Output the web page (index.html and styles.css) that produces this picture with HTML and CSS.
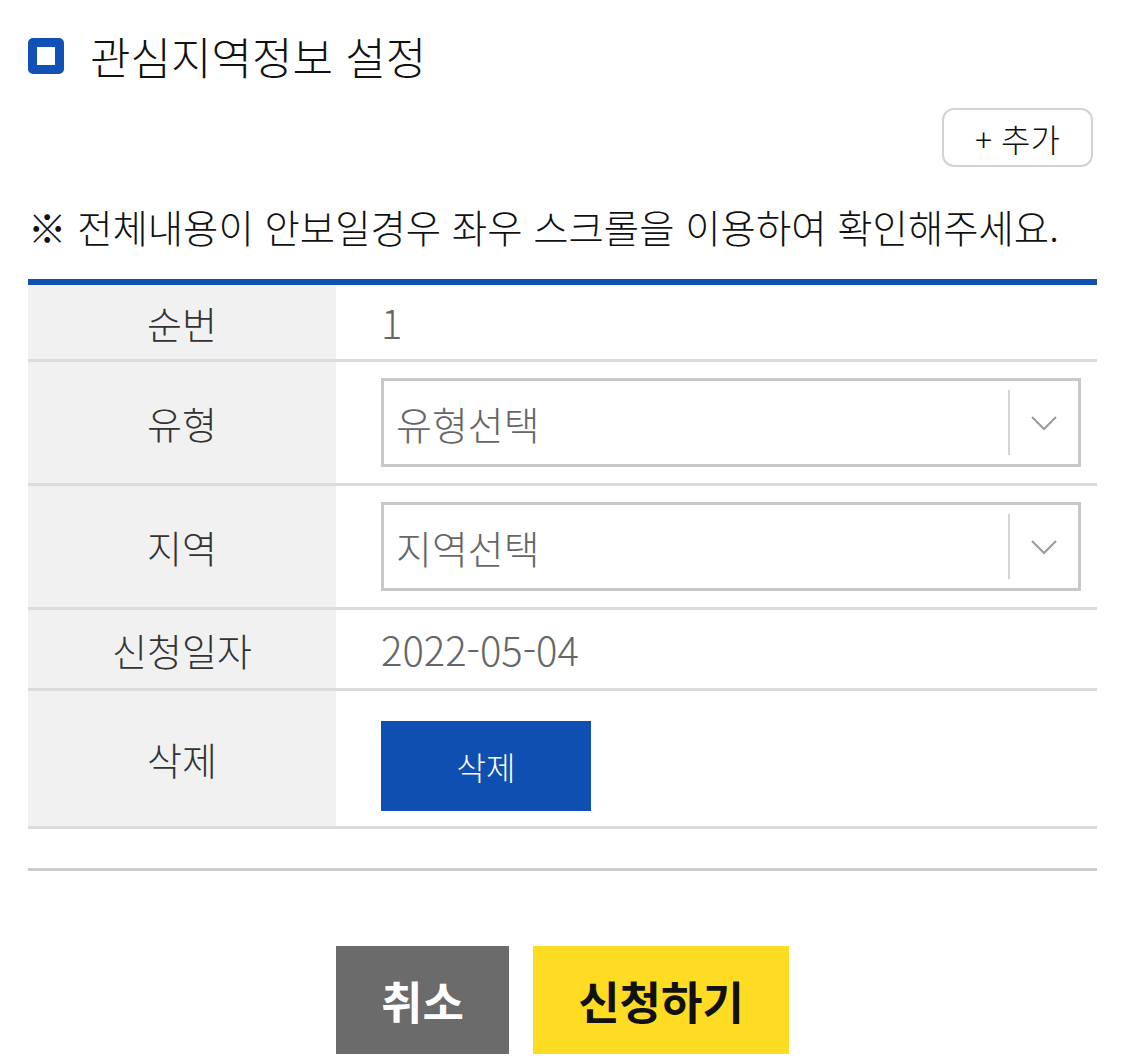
FILE: index.html
```html
<!DOCTYPE html>
<html lang="ko">
<head>
<meta charset="utf-8">
<title>관심지역정보 설정</title>
<link rel="stylesheet" href="styles.css">
</head>
<body>
<div class="page">
  <h1 class="title"><span class="title-icon"></span>관심지역정보 설정</h1>
  <div class="toolbar">
    <button class="add-btn" type="button">+ 추가</button>
  </div>
  <p class="notice">※ 전체내용이 안보일경우 좌우 스크롤을 이용하여 확인해주세요.</p>
  <div class="table">
    <div class="row row-seq">
      <div class="th">순번</div>
      <div class="td value">1</div>
    </div>
    <div class="row row-select">
      <div class="th">유형</div>
      <div class="td">
        <div class="select">
          <span class="placeholder">유형선택</span>
          <span class="divider"></span>
          <svg class="chevron" width="28" height="16" viewBox="0 0 28 16"><path d="M2 2 L14 14 L26 2" fill="none" stroke="#9a9a9a" stroke-width="2"/></svg>
        </div>
      </div>
    </div>
    <div class="row row-select">
      <div class="th">지역</div>
      <div class="td">
        <div class="select">
          <span class="placeholder">지역선택</span>
          <span class="divider"></span>
          <svg class="chevron" width="28" height="16" viewBox="0 0 28 16"><path d="M2 2 L14 14 L26 2" fill="none" stroke="#9a9a9a" stroke-width="2"/></svg>
        </div>
      </div>
    </div>
    <div class="row row-date">
      <div class="th">신청일자</div>
      <div class="td value">2022-05-04</div>
    </div>
    <div class="row row-del">
      <div class="th">삭제</div>
      <div class="td">
        <button class="del-btn" type="button">삭제</button>
      </div>
    </div>
  </div>
  <div class="table-end"></div>
  <div class="actions">
    <button class="btn-cancel" type="button">취소</button>
    <button class="btn-apply" type="button">신청하기</button>
  </div>
</div>
</body>
</html>
```
FILE: styles.css
```css
* { box-sizing: border-box; }
html, body { margin: 0; padding: 0; background: #fff; }
body {
  font-family: "Noto Sans CJK KR", "Noto Sans", sans-serif;
  font-weight: 300;
  color: #111;
}
button { font-family: inherit; cursor: pointer; }
.page {
  padding: 32px 28px 0 28px;
}
.title {
  margin: 0;
  height: 48px;
  display: flex;
  align-items: center;
  font-size: 44px;
  font-weight: 300;
  line-height: 48px;
  color: #111;
}
.title-icon {
  width: 36px;
  height: 36px;
  border: 9px solid #1150b4;
  border-radius: 5px;
  background: #fff;
  margin-right: 26px;
  flex: none;
}
.toolbar {
  display: flex;
  justify-content: flex-end;
  margin-top: 28px;
  padding-right: 4px;
}
.add-btn {
  width: 151px;
  height: 59px;
  border: 2px solid #d2d2d2;
  border-radius: 12px;
  background: #fff;
  font-size: 32px;
  font-weight: 300;
  color: #111;
  padding: 0;
  line-height: 1;
}
.notice {
  margin: 35px 0 0 0;
  font-size: 38.4px;
  line-height: 48px;
  color: #111;
}
.table {
  margin-top: 29px;
  border-top: 6px solid #1150b0;
}
.row {
  display: grid;
  grid-template-columns: 308px 1fr;
  border-bottom: 3px solid #dcdcdc;
}
.th {
  background: #f1f1f1;
  display: flex;
  align-items: center;
  justify-content: center;
  font-size: 38px;
  color: #333;
}
.td {
  padding: 0 16px 0 45px;
  display: flex;
  align-items: center;
}
.value {
  font-size: 40px;
  color: #666;
}
.row-seq { height: 77px; }
.row-select { height: 124px; }
.row-date { height: 81px; }
.row-del { height: 138px; }
.row-select .td { padding-top: 16px; padding-bottom: 16px; }
.select {
  flex: 1;
  height: 89px;
  border: 3px solid #c8c8c8;
  display: flex;
  align-items: center;
  padding-left: 12px;
  background: #fff;
}
.placeholder {
  flex: 1;
  font-size: 39px;
  color: #666;
}
.divider {
  width: 2px;
  align-self: stretch;
  margin: 9px 0;
  background: #d4d4d4;
}
.chevron {
  margin: 0 20px 0 20px;
  flex: none;
}
.row-del .th { align-items: flex-start; padding-top: 40px; }
.row-del .td { align-items: flex-start; padding-top: 30px; }
.del-btn {
  width: 210px;
  height: 90px;
  border: none;
  background: #0f4fb2;
  color: #fff;
  font-size: 32px;
  font-weight: 300;
  padding: 0;
}
.table-end {
  height: 42px;
  border-bottom: 3px solid #cccccc;
}
.actions {
  display: flex;
  justify-content: center;
  gap: 24px;
  margin-top: 75px;
}
.btn-cancel, .btn-apply {
  height: 108px;
  border: none;
  font-size: 45px;
  font-weight: 700;
  padding: 0;
}
.btn-cancel {
  width: 173px;
  background: #6b6b6b;
  color: #fff;
}
.btn-apply {
  width: 256px;
  background: #ffdc24;
  color: #111;
}
```
